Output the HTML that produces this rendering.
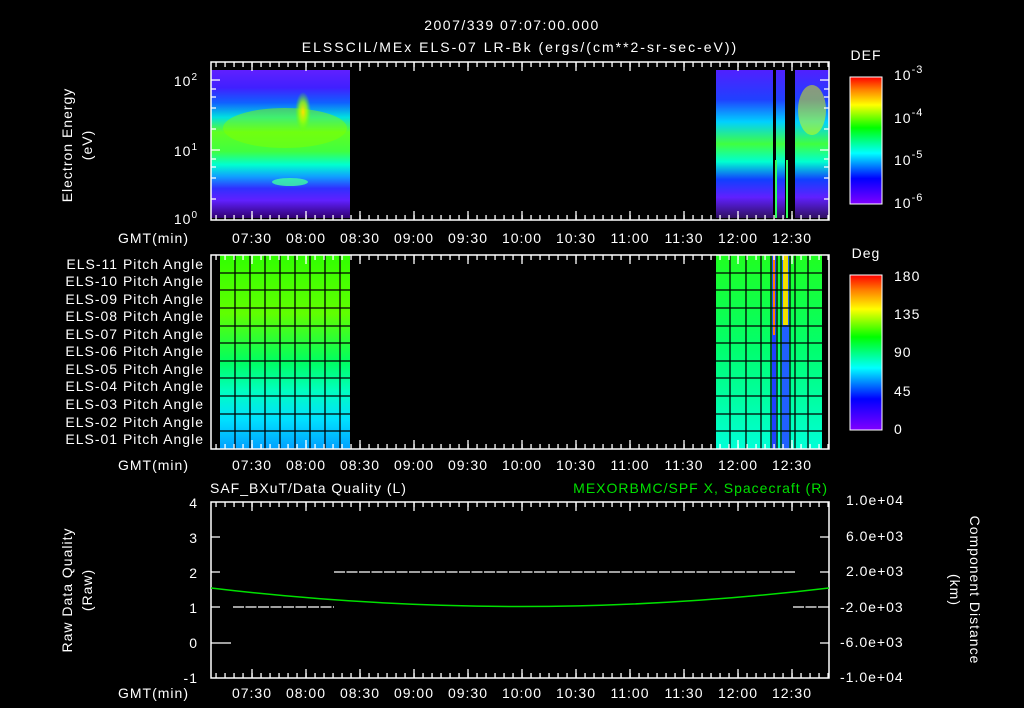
<!DOCTYPE html>
<html><head><meta charset="utf-8"><style>
body{margin:0;background:#000;width:1024px;height:708px;overflow:hidden}
svg{display:block}
text{font-family:"Liberation Sans",sans-serif;fill:#fff;font-size:14px;letter-spacing:1px}
</style></head><body>
<svg width="1024" height="708" viewBox="0 0 1024 708" xmlns="http://www.w3.org/2000/svg">
<defs>
<linearGradient id="rain" x1="0" y1="1" x2="0" y2="0">
<stop offset="0" stop-color="#8000ff"/><stop offset="0.2" stop-color="#0000ff"/><stop offset="0.4" stop-color="#00ffff"/><stop offset="0.6" stop-color="#00ff00"/><stop offset="0.78" stop-color="#ffff00"/><stop offset="0.9" stop-color="#ff8000"/><stop offset="1" stop-color="#ff0000"/>
</linearGradient>
<linearGradient id="spec" x1="0" y1="0" x2="0" y2="1">
<stop offset="0" stop-color="#6020ff"/><stop offset="0.12" stop-color="#4020ff"/><stop offset="0.22" stop-color="#1060ff"/><stop offset="0.32" stop-color="#00e0e0"/><stop offset="0.42" stop-color="#60ff20"/><stop offset="0.55" stop-color="#40ff40"/><stop offset="0.64" stop-color="#00ffd0"/><stop offset="0.72" stop-color="#10a0ff"/><stop offset="0.8" stop-color="#3030ff"/><stop offset="0.88" stop-color="#6020ff"/><stop offset="1" stop-color="#300070"/>
</linearGradient>
<linearGradient id="spec2" x1="0" y1="0" x2="0" y2="1">
<stop offset="0" stop-color="#5020ff"/><stop offset="0.2" stop-color="#2040ff"/><stop offset="0.35" stop-color="#00d0ff"/><stop offset="0.5" stop-color="#40ff40"/><stop offset="0.62" stop-color="#00ffd0"/><stop offset="0.74" stop-color="#1040ff"/><stop offset="0.86" stop-color="#6020ff"/><stop offset="1" stop-color="#301060"/>
</linearGradient>
<radialGradient id="blob" cx="0.5" cy="0.5" r="0.5"><stop offset="0" stop-color="#ffe000"/><stop offset="0.5" stop-color="#a0ff00" stop-opacity="0.8"/><stop offset="1" stop-color="#60ff00" stop-opacity="0"/></radialGradient>
<linearGradient id="pa" x1="0" y1="0" x2="0" y2="1">
<stop offset="0" stop-color="#30ff00"/><stop offset="0.3" stop-color="#60ff00"/><stop offset="0.55" stop-color="#00ff60"/><stop offset="0.7" stop-color="#00ffc0"/><stop offset="0.85" stop-color="#00e0ff"/><stop offset="1" stop-color="#00a0ff"/>
</linearGradient>
<linearGradient id="pa2" x1="0" y1="0" x2="0" y2="1">
<stop offset="0" stop-color="#20ff20"/><stop offset="0.5" stop-color="#00ff70"/><stop offset="1" stop-color="#00ffd8"/>
</linearGradient>
</defs>

<text x="512" y="30" text-anchor="middle" font-size="16" style="letter-spacing:1.5px">2007/339 07:07:00.000</text>
<text x="520" y="52" text-anchor="middle" font-size="16" style="letter-spacing:2px">ELSSCIL/MEx ELS-07 LR-Bk  (ergs/(cm**2-sr-sec-eV))</text>

<!-- Panel 1 -->
<rect x="211" y="70" width="139" height="148" fill="url(#spec)"/>
<ellipse cx="285" cy="128" rx="62" ry="20" fill="#80ff00" opacity="0.5"/>
<ellipse cx="303" cy="112" rx="8" ry="20" fill="url(#blob)"/>
<ellipse cx="290" cy="182" rx="18" ry="4" fill="#40ffa0" opacity="0.8"/>
<rect x="716" y="70" width="57" height="148" fill="url(#spec2)"/>
<rect x="776" y="70" width="9" height="148" fill="url(#spec2)"/>
<rect x="795" y="70" width="34" height="148" fill="url(#spec2)"/>
<ellipse cx="812" cy="110" rx="14" ry="25" fill="#e0ff00" opacity="0.5"/>
<rect x="775" y="160" width="2" height="58" fill="#30ff60"/>
<rect x="786" y="160" width="2" height="58" fill="#30ff60"/>
<rect x="211" y="62" width="618" height="158" fill="none" stroke="#fff" stroke-width="1.5"/>
<g stroke="#fff" fill="none">
<path d="M211 64.5H829M211 217.5H829" stroke-width="5" stroke-dasharray="1.3 7.7" stroke-dashoffset="-4.4"/>
<path d="M252 62v9M306 62v9M360 62v9M414 62v9M468 62v9M522 62v9M576 62v9M630 62v9M684 62v9M738 62v9M792 62v9M252 220v-9M306 220v-9M360 220v-9M414 220v-9M468 220v-9M522 220v-9M576 220v-9M630 220v-9M684 220v-9M738 220v-9M792 220v-9" stroke-width="1.3"/>
<path d="M211 80h9M211 150h9M211 199h5M211 178h5M211 167h5M211 159h5M211 129h5M211 108h5M211 97h5M211 89h5M829 80h-9M829 150h-9M829 199h-5M829 178h-5M829 167h-5M829 159h-5M829 129h-5M829 108h-5M829 97h-5M829 89h-5" stroke-width="1.3"/>
</g>
<text x="198" y="86" text-anchor="end">10<tspan font-size="10" dy="-6">2</tspan></text>
<text x="198" y="156" text-anchor="end">10<tspan font-size="10" dy="-6">1</tspan></text>
<text x="198" y="224" text-anchor="end">10<tspan font-size="10" dy="-6">0</tspan></text>
<text transform="translate(72,145) rotate(-90)" text-anchor="middle" font-size="15">Electron Energy</text>
<text transform="translate(92,145) rotate(-90)" text-anchor="middle" font-size="15">(eV)</text>
<text x="866" y="60" text-anchor="middle" font-size="16">DEF</text>
<rect x="850" y="77" width="32" height="127" fill="url(#rain)" stroke="#fff"/>
<text x="894" y="80" font-size="16">10<tspan font-size="11" dy="-7">-3</tspan></text>
<text x="894" y="123" font-size="16">10<tspan font-size="11" dy="-7">-4</tspan></text>
<text x="894" y="165" font-size="16">10<tspan font-size="11" dy="-7">-5</tspan></text>
<text x="894" y="208" font-size="16">10<tspan font-size="11" dy="-7">-6</tspan></text>

<g text-anchor="middle" font-size="15">
<text x="252" y="243">07:30</text><text x="306" y="243">08:00</text><text x="360" y="243">08:30</text><text x="414" y="243">09:00</text><text x="468" y="243">09:30</text><text x="522" y="243">10:00</text><text x="576" y="243">10:30</text><text x="630" y="243">11:00</text><text x="684" y="243">11:30</text><text x="738" y="243">12:00</text><text x="792" y="243">12:30</text>
<text x="252" y="470">07:30</text><text x="306" y="470">08:00</text><text x="360" y="470">08:30</text><text x="414" y="470">09:00</text><text x="468" y="470">09:30</text><text x="522" y="470">10:00</text><text x="576" y="470">10:30</text><text x="630" y="470">11:00</text><text x="684" y="470">11:30</text><text x="738" y="470">12:00</text><text x="792" y="470">12:30</text>
<text x="252" y="698">07:30</text><text x="306" y="698">08:00</text><text x="360" y="698">08:30</text><text x="414" y="698">09:00</text><text x="468" y="698">09:30</text><text x="522" y="698">10:00</text><text x="576" y="698">10:30</text><text x="630" y="698">11:00</text><text x="684" y="698">11:30</text><text x="738" y="698">12:00</text><text x="792" y="698">12:30</text>
</g>
<text x="118" y="243">GMT(min)</text>
<text x="118" y="470">GMT(min)</text>
<text x="118" y="698">GMT(min)</text>

<!-- Panel 2 -->
<rect x="220" y="255" width="130" height="194" fill="url(#pa)"/>
<rect x="716" y="255" width="106" height="194" fill="url(#pa2)"/>
<rect x="772" y="255" width="4" height="194" fill="#2040ff"/><rect x="773" y="255" width="2" height="80" fill="#ff8000"/>
<rect x="782" y="255" width="7" height="194" fill="#2060ff"/><rect x="783" y="255" width="5" height="70" fill="#f0e000"/>
<g stroke="#000" stroke-width="1.3">
<path d="M220 273H350M220 290H350M220 308H350M220 326H350M220 343H350M220 361H350M220 378H350M220 396H350M220 414H350M220 431H350"/>
<path d="M235 255V449M250 255V449M265 255V449M280 255V449M295 255V449M310 255V449M325 255V449M340 255V449"/>
<path d="M716 273H822M716 290H822M716 308H822M716 326H822M716 343H822M716 361H822M716 378H822M716 396H822M716 414H822M716 431H822"/>
<path d="M730 255V449M746 255V449M761 255V449M771 255V449M777 255V449M781 255V449M790 255V449M795 255V449M808 255V449"/>
</g>
<rect x="211" y="255" width="618" height="194" fill="none" stroke="#fff" stroke-width="1.5"/>
<g stroke="#fff" fill="none">
<path d="M211 257.5H829M211 446.5H829" stroke-width="5" stroke-dasharray="1.3 7.7" stroke-dashoffset="-4.4"/>
<path d="M252 255v9M306 255v9M360 255v9M414 255v9M468 255v9M522 255v9M576 255v9M630 255v9M684 255v9M738 255v9M792 255v9M252 449v-9M306 449v-9M360 449v-9M414 449v-9M468 449v-9M522 449v-9M576 449v-9M630 449v-9M684 449v-9M738 449v-9M792 449v-9" stroke-width="1.3"/>
</g>
<g text-anchor="end" font-size="13">
<text x="204" y="269">ELS-11 Pitch Angle</text><text x="204" y="286">ELS-10 Pitch Angle</text><text x="204" y="304">ELS-09 Pitch Angle</text><text x="204" y="321">ELS-08 Pitch Angle</text><text x="204" y="339">ELS-07 Pitch Angle</text><text x="204" y="356">ELS-06 Pitch Angle</text><text x="204" y="374">ELS-05 Pitch Angle</text><text x="204" y="391">ELS-04 Pitch Angle</text><text x="204" y="409">ELS-03 Pitch Angle</text><text x="204" y="427">ELS-02 Pitch Angle</text><text x="204" y="444">ELS-01 Pitch Angle</text>
</g>
<text x="866" y="258" text-anchor="middle" font-size="16">Deg</text>
<rect x="850" y="275" width="32" height="155" fill="url(#rain)" stroke="#fff"/>
<g font-size="16"><text x="894" y="281">180</text><text x="894" y="319">135</text><text x="894" y="357">90</text><text x="894" y="396">45</text><text x="894" y="434">0</text></g>

<!-- Panel 3 -->
<text x="210" y="493" font-size="16">SAF_BXuT/Data Quality (L)</text>
<text x="828" y="493" font-size="16" text-anchor="end" style="fill:#00e000">MEXORBMC/SPF X, Spacecraft (R)</text>
<rect x="211" y="502" width="618" height="176" fill="none" stroke="#fff" stroke-width="1.5"/>
<g stroke="#fff" fill="none">
<path d="M211 504.5H829M211 675.5H829" stroke-width="5" stroke-dasharray="1.3 7.7" stroke-dashoffset="-4.4"/>
<path d="M252 502v9M306 502v9M360 502v9M414 502v9M468 502v9M522 502v9M576 502v9M630 502v9M684 502v9M738 502v9M792 502v9M252 678v-9M306 678v-9M360 678v-9M414 678v-9M468 678v-9M522 678v-9M576 678v-9M630 678v-9M684 678v-9M738 678v-9M792 678v-9" stroke-width="1.3"/>
<path d="M211 537h9M211 572h9M211 607h9M211 643h9M829 537h-9M829 572h-9M829 607h-9M829 643h-9" stroke-width="1.3"/>
</g>
<g stroke="#fff" stroke-width="1.3" stroke-dasharray="11,1.5">
<path d="M220 643H231M233 607H334M334 572H795M793 607H820"/>
</g>
<path d="M211 588 Q520 625 829 588" fill="none" stroke="#00e000" stroke-width="1.5"/>
<g text-anchor="end" font-size="16"><text x="198" y="508">4</text><text x="198" y="543">3</text><text x="198" y="578">2</text><text x="198" y="613">1</text><text x="198" y="648">0</text><text x="198" y="683">-1</text></g>
<g font-size="13"><text x="846" y="505">1.0e+04</text><text x="846" y="541">6.0e+03</text><text x="846" y="576">2.0e+03</text><text x="840" y="612">-2.0e+03</text><text x="840" y="647">-6.0e+03</text><text x="840" y="682">-1.0e+04</text></g>
<text transform="translate(72,590) rotate(-90)" text-anchor="middle" font-size="15">Raw Data Quality</text>
<text transform="translate(92,590) rotate(-90)" text-anchor="middle" font-size="15">(Raw)</text>
<text transform="translate(970,590) rotate(90)" text-anchor="middle" font-size="15">Component Distance</text>
<text transform="translate(950,590) rotate(90)" text-anchor="middle" font-size="15">(km)</text>
</svg>
</body></html>
